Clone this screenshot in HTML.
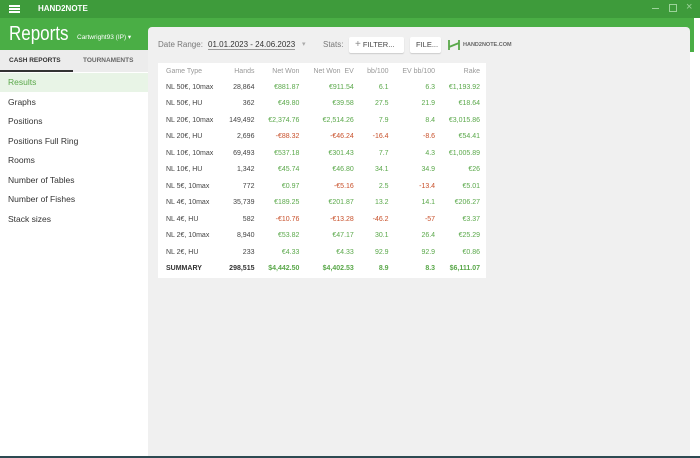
<!DOCTYPE html><html><head><style>
*{margin:0;padding:0;box-sizing:border-box}
body{width:700px;height:458px;position:relative;overflow:hidden;background:#fff;font-family:"Liberation Sans",sans-serif;}
.abs{position:absolute}
.title{left:0;top:0;width:700px;height:18px;background:#3e9b3b;}
.hdr{left:0;top:18px;width:700px;height:32px;background:#4aae45;}
.main{left:148px;top:27px;width:542px;height:429px;background:#f0f0f0;border-radius:4px 4px 0 0}
.side{left:0;top:50px;width:148px;height:406px;background:#fff}
.tabs{left:0;top:50px;width:148px;height:22px;background:#ececec}
.bot{left:0;top:456px;width:700px;height:2px;background:#2d4a52}
.menu div{padding-left:8px;height:19.5px;line-height:19.5px;font-size:8.5px;color:#333}
table{border-collapse:collapse;font-size:7px;}
td{height:16.5px;padding:0 6px;text-align:right;color:#444;white-space:nowrap}
td:first-child{text-align:left;padding-left:8px}
.g{color:#5aa84a}.r{color:#c8502a}
tr.h td{color:#999;height:16px}
tr.s td{font-weight:bold;color:#333}
tr.s td.g{color:#5aa84a}
.btn{background:#fff;border-radius:2px;height:16px;line-height:16px;font-size:7.5px;color:#444;padding:0 6px;box-shadow:0 1px 1px #ccc}
</style></head><body>
<div class="abs title"></div>
<div class="abs" style="left:9px;top:5px;width:11px;height:1.5px;background:#fff;box-shadow:0 3px 0 #fff,0 6px 0 #fff"></div>
<div class="abs" style="left:38px;top:4px;font-size:8px;color:#fff;font-weight:bold">HAND2NOTE</div>
<div class="abs" style="left:652px;top:8px;width:7px;height:1px;background:#9cd39a"></div>
<div class="abs" style="left:669px;top:4px;width:8px;height:8px;border:1px solid #9cd39a"></div>
<div class="abs" style="left:686px;top:1px;color:#9cd39a;font-size:11px">×</div>
<div class="abs hdr"></div>
<div class="abs" style="left:690px;top:18px;width:10px;height:440px;background:#fff"></div>
<div class="abs" style="left:690px;top:18px;width:4px;height:34px;background:#4aae45"></div>
<div class="abs" style="left:9px;top:23px;font-size:20px;color:#fff;transform:scaleX(0.85);transform-origin:0 0">Reports</div>
<div class="abs" style="left:77px;top:33px;font-size:6.5px;color:#fff">Cartwright93 (IP) ▾</div>
<div class="abs main"></div>
<div class="abs side"></div>
<div class="abs tabs"></div>
<div class="abs" style="left:9px;top:57px;font-size:6.5px;font-weight:bold;color:#333">CASH REPORTS</div>
<div class="abs" style="left:83px;top:57px;font-size:6.5px;font-weight:bold;color:#666">TOURNAMENTS</div>
<div class="abs" style="left:0;top:70px;width:73px;height:2px;background:#333"></div>
<div class="abs" style="left:0;top:73px;width:148px;height:19px;background:#e8f4e6"></div>
<div class="abs menu" style="left:0;top:73px;width:148px">
<div style="color:#5aa84a">Results</div><div>Graphs</div><div>Positions</div><div>Positions Full Ring</div><div>Rooms</div><div>Number of Tables</div><div>Number of Fishes</div><div>Stack sizes</div></div>
<div class="abs" style="left:158px;top:40px;font-size:8px;color:#777">Date Range:</div>
<div class="abs" style="left:208px;top:40px;font-size:8px;color:#333;border-bottom:1px solid #999">01.01.2023 - 24.06.2023</div>
<div class="abs" style="left:302px;top:40px;font-size:7px;color:#aaa">▾</div>
<div class="abs" style="left:323px;top:40px;font-size:8px;color:#777">Stats:</div>
<div class="abs btn" style="left:349px;top:37px;width:55px"><span style="color:#888;font-size:10px">+</span> FILTER...</div>
<div class="abs btn" style="left:410px;top:37px;width:31px">FILE...</div>
<svg class="abs" style="left:447px;top:38px" width="14" height="14"><path d="M2 2v10M12 2v10M2 9L12 5" stroke="#5aa84a" stroke-width="1.8" fill="none"/></svg>
<div class="abs" style="left:463px;top:42px;font-size:5.5px;font-weight:bold;color:#666">HAND2NOTE.COM</div>
<div class="abs" style="left:158px;top:63px;width:328px;height:215px;background:#fff">
<table style="width:328px">
<tr class="h"><td>Game Type</td><td>Hands</td><td>Net Won</td><td>Net Won &nbsp;EV</td><td>bb/100</td><td>EV bb/100</td><td>Rake</td></tr>
<tr><td>NL 50€, 10max</td><td>28,864</td><td class="g">€881.87</td><td class="g">€911.54</td><td class="g">6.1</td><td class="g">6.3</td><td class="g">€1,193.92</td></tr>
<tr><td>NL 50€, HU</td><td>362</td><td class="g">€49.80</td><td class="g">€39.58</td><td class="g">27.5</td><td class="g">21.9</td><td class="g">€18.64</td></tr>
<tr><td>NL 20€, 10max</td><td>149,492</td><td class="g">€2,374.76</td><td class="g">€2,514.26</td><td class="g">7.9</td><td class="g">8.4</td><td class="g">€3,015.86</td></tr>
<tr><td>NL 20€, HU</td><td>2,696</td><td class="r">-€88.32</td><td class="r">-€46.24</td><td class="r">-16.4</td><td class="r">-8.6</td><td class="g">€54.41</td></tr>
<tr><td>NL 10€, 10max</td><td>69,493</td><td class="g">€537.18</td><td class="g">€301.43</td><td class="g">7.7</td><td class="g">4.3</td><td class="g">€1,005.89</td></tr>
<tr><td>NL 10€, HU</td><td>1,342</td><td class="g">€45.74</td><td class="g">€46.80</td><td class="g">34.1</td><td class="g">34.9</td><td class="g">€26</td></tr>
<tr><td>NL 5€, 10max</td><td>772</td><td class="g">€0.97</td><td class="r">-€5.16</td><td class="g">2.5</td><td class="r">-13.4</td><td class="g">€5.01</td></tr>
<tr><td>NL 4€, 10max</td><td>35,739</td><td class="g">€189.25</td><td class="g">€201.87</td><td class="g">13.2</td><td class="g">14.1</td><td class="g">€206.27</td></tr>
<tr><td>NL 4€, HU</td><td>582</td><td class="r">-€10.76</td><td class="r">-€13.28</td><td class="r">-46.2</td><td class="r">-57</td><td class="g">€3.37</td></tr>
<tr><td>NL 2€, 10max</td><td>8,940</td><td class="g">€53.82</td><td class="g">€47.17</td><td class="g">30.1</td><td class="g">26.4</td><td class="g">€25.29</td></tr>
<tr><td>NL 2€, HU</td><td>233</td><td class="g">€4.33</td><td class="g">€4.33</td><td class="g">92.9</td><td class="g">92.9</td><td class="g">€0.86</td></tr>
<tr class="s"><td>SUMMARY</td><td>298,515</td><td class="g">$4,442.50</td><td class="g">$4,402.53</td><td class="g">8.9</td><td class="g">8.3</td><td class="g">$6,111.07</td></tr>
</table></div>
<div class="abs bot"></div>
</body></html>
